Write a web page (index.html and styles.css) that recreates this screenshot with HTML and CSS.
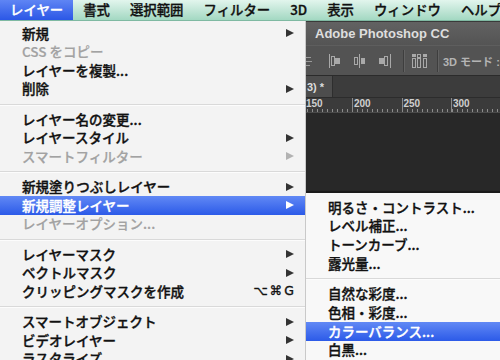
FILE: index.html
```html
<!DOCTYPE html>
<html lang="ja">
<head>
<meta charset="utf-8">
<title>レイヤー メニュー</title>
<link rel="stylesheet" href="styles.css">
</head>
<body>
<div class="screen">
  <header class="menubar">
    <span class="mb-item active">レイヤー</span>
    <span class="mb-item">書式</span>
    <span class="mb-item">選択範囲</span>
    <span class="mb-item">フィルター</span>
    <span class="mb-item">3D</span>
    <span class="mb-item">表示</span>
    <span class="mb-item">ウィンドウ</span>
    <span class="mb-item">ヘルプ</span>
  </header>
  <div class="stage">
    <nav class="menu menu-main">
      <div class="item"><span>新規</span><i class="arrow"></i></div>
      <div class="item disabled"><span>CSS をコピー</span></div>
      <div class="item"><span>レイヤーを複製...</span></div>
      <div class="item"><span>削除</span><i class="arrow"></i></div>
      <div class="sep"></div>
      <div class="item"><span>レイヤー名の変更...</span></div>
      <div class="item"><span>レイヤースタイル</span><i class="arrow"></i></div>
      <div class="item disabled"><span>スマートフィルター</span><i class="arrow"></i></div>
      <div class="sep"></div>
      <div class="item"><span>新規塗りつぶしレイヤー</span><i class="arrow"></i></div>
      <div class="item hl"><span>新規調整レイヤー</span><i class="arrow"></i></div>
      <div class="item disabled"><span>レイヤーオプション...</span></div>
      <div class="sep"></div>
      <div class="item"><span>レイヤーマスク</span><i class="arrow"></i></div>
      <div class="item"><span>ベクトルマスク</span><i class="arrow"></i></div>
      <div class="item"><span>クリッピングマスクを作成</span><span class="shortcut">⌥⌘G</span></div>
      <div class="sep"></div>
      <div class="item"><span>スマートオブジェクト</span><i class="arrow"></i></div>
      <div class="item"><span>ビデオレイヤー</span><i class="arrow"></i></div>
      <div class="item"><span>ラスタライズ</span><i class="arrow"></i></div>
    </nav>
    <div class="right">
      <section class="ps">
        <div class="ps-title">Adobe Photoshop CC</div>
        <div class="ps-options">
          <svg class="ic ic-partial" width="7" height="16" viewBox="0 0 7 16"><path d="M0 4.5h5M0 8.5h6M0 12.5h4" stroke="#9a9a9a" fill="none"/></svg>
          <svg class="ic ic-a" width="14" height="16" viewBox="0 0 14 16"><path d="M1.5 1v14" stroke="#a9a9a9"/><rect x="3.5" y="3.5" width="3" height="9" fill="none" stroke="#a9a9a9"/><rect x="7" y="5" width="5" height="6" fill="#a9a9a9"/></svg>
          <svg class="ic ic-b" width="14" height="16" viewBox="0 0 14 16"><rect x="1.5" y="4.5" width="3" height="7" fill="none" stroke="#a9a9a9"/><path d="M6.5 1v14" stroke="#a9a9a9"/><rect x="8" y="5" width="4" height="6" fill="#a9a9a9"/></svg>
          <svg class="ic ic-c" width="14" height="16" viewBox="0 0 14 16"><rect x="1" y="5" width="5" height="6" fill="#a9a9a9"/><rect x="6.5" y="3.5" width="3" height="9" fill="none" stroke="#a9a9a9"/><path d="M12.5 1v14" stroke="#a9a9a9"/></svg>
          <span class="opt-sep"></span>
          <svg class="ic ic-d" width="15" height="16" viewBox="0 0 15 16"><rect x="0" y="1" width="4" height="3" fill="#a9a9a9"/><rect x="0.5" y="5.5" width="3" height="9" fill="none" stroke="#a9a9a9"/><rect x="5.5" y="1.5" width="3" height="3" fill="none" stroke="#a9a9a9"/><rect x="5.5" y="5.5" width="3" height="9" fill="none" stroke="#a9a9a9"/><rect x="11" y="1" width="4" height="3" fill="#a9a9a9"/><rect x="11.5" y="5.5" width="3" height="9" fill="none" stroke="#a9a9a9"/></svg>
          <span class="opt-sep opt-sep2"></span>
          <span class="opt-label">3D モード :</span>
        </div>
        <div class="ps-tabs"><span class="tab">3) *</span></div>
        <div class="ps-ruler">
          <span class="seg seg-first">150</span>
          <span class="seg">200</span>
          <span class="seg">250</span>
          <span class="seg">300</span>
        </div>
        <div class="ps-canvas"></div>
      </section>
      <nav class="menu menu-sub">
        <div class="item"><span>明るさ・コントラスト...</span></div>
        <div class="item"><span>レベル補正...</span></div>
        <div class="item"><span>トーンカーブ...</span></div>
        <div class="item"><span>露光量...</span></div>
        <div class="sep"></div>
        <div class="item"><span>自然な彩度...</span></div>
        <div class="item"><span>色相・彩度...</span></div>
        <div class="item hl"><span>カラーバランス...</span></div>
        <div class="item"><span>白黒...</span></div>
      </nav>
    </div>
  </div>
</div>
</body>
</html>
```
FILE: styles.css
```css
* { box-sizing: border-box; margin: 0; padding: 0; }
html, body { width: 500px; height: 360px; overflow: hidden; }
body {
  font-family: "Noto Sans CJK JP", sans-serif;
  font-size: 13.5px;
  font-weight: 500;
  color: #111;
  background: #f3f3f3;
}
.screen { width: 500px; height: 360px; display: flex; flex-direction: column; }

/* top menubar */
.menubar {
  height: 21px;
  flex: none;
  display: flex;
  background: linear-gradient(#e2f5ed, #a3d8c2);
  border-bottom: 1px solid #7fb9a2;
}
.mb-item {
  display: flex;
  align-items: center;
  padding: 0 10px;
  font-size: 13.4px;
  line-height: 1;
  white-space: nowrap;
  color: #111;
  -webkit-text-stroke: 0.3px currentColor;
}
.mb-item.active {
  background: linear-gradient(#5f85f4, #2b57e6);
  color: #fff;
}

.stage { flex: 1; display: flex; min-height: 0; }

/* dropdown menus */
.menu-main {
  width: 306px;
  flex: none;
  background: #f3f3f3;
  border-right: 1px solid #c9c9c9;
  padding-top: 3px;
}
.item {
  height: 18.5px;
  display: flex;
  align-items: center;
  justify-content: space-between;
  padding: 0 11px 0 22px;
  line-height: 1;
  white-space: nowrap;
  -webkit-text-stroke: 0.35px currentColor;
}
.item.disabled { color: #a2a2a2; -webkit-text-stroke: 0.2px currentColor; }
.item.hl {
  background: linear-gradient(#6189f5, #2c5ae8);
  color: #fff;
}
.arrow {
  display: block;
  width: 0;
  height: 0;
  border-left: 8px solid #333;
  border-top: 4.5px solid transparent;
  border-bottom: 4.5px solid transparent;
}
.disabled .arrow { border-left-color: #b2b2b2; }
.hl .arrow { border-left-color: #fff; }
.shortcut {
  font-family: "DejaVu Sans", "Noto Sans CJK JP", sans-serif;
  font-size: 12.5px;
  letter-spacing: 2px;
  margin-right: -2px;
}
.sep { height: 12px; display: flex; align-items: center; }
.sep::before {
  content: "";
  flex: 1;
  height: 1px;
  background: #d9d9d9;
  box-shadow: 0 1px 0 #fcfcfc;
}

/* right column */
.right { flex: 1; display: flex; flex-direction: column; min-width: 0; }
.ps {
  height: 172px;
  flex: none;
  display: flex;
  flex-direction: column;
  background: #282828;
}
.ps-title {
  height: 24px;
  flex: none;
  display: flex;
  align-items: center;
  padding-left: 9px;
  border-top: 1px solid #3a3a3a;
  background: linear-gradient(#626262, #545454);
  color: #dedede;
  font: bold 13px "Liberation Sans", sans-serif;
  white-space: nowrap;
}
.ps-options {
  height: 30px;
  flex: none;
  display: flex;
  align-items: center;
  background: #535353;
  border-top: 1px solid #5e5e5e;
  white-space: nowrap;
  overflow: hidden;
}
.ic { flex: none; display: block; }
.ic-a { margin-left: 15px; }
.ic-b { margin-left: 11px; }
.ic-c { margin-left: 11px; }
.opt-sep {
  width: 1px;
  height: 22px;
  background: #3e3e3e;
  box-shadow: 1px 0 0 #626262;
  margin-left: 11px;
  flex: none;
}
.ic-d { margin-left: 8px; }
.opt-sep2 { margin-left: 10px; }
.opt-label {
  margin-left: 5px;
  font: bold 11px "Liberation Sans", "Noto Sans CJK JP", sans-serif;
  color: #b4b4b4;
  flex: none;
}
.ps-tabs {
  height: 22px;
  flex: none;
  display: flex;
  background: #3c3c3c;
  border-top: 1px solid #2b2b2b;
}
.tab {
  width: 27px;
  display: flex;
  align-items: center;
  padding-left: 1px;
  background: #4d4d4d;
  border-right: 1px solid #2e2e2e;
  color: #dcdcdc;
  font: bold 11px "Liberation Sans", sans-serif;
  white-space: nowrap;
}
.ps-ruler {
  height: 16px;
  flex: none;
  display: flex;
  background-color: #3b3b3b;
  background-image: repeating-linear-gradient(90deg, #8c8c8c 0 1px, transparent 1px 5px);
  background-size: 100% 3px;
  background-position: 1px 100%;
  background-repeat: no-repeat;
  border-top: 1px solid #2c2c2c;
  border-bottom: 1px solid #4a4a4a;
}
.seg {
  width: 49.5px;
  flex: none;
  padding: 1px 0 0 1px;
  border-left: 1px solid #8a8a8a;
  color: #d0d0d0;
  font: bold 10px "Liberation Sans", sans-serif;
  line-height: 10px;
}
.seg-first { width: 46px; border-left: none; padding-left: 0; }
.ps-canvas {
  flex: 1;
  background: #282828;
  border-bottom: 2px solid #1b1b1b;
}

.menu-sub {
  flex: 1;
  background: #f8f8f8;
  padding-top: 5px;
}
.menu-sub .item { height: 18.7px; }
```
